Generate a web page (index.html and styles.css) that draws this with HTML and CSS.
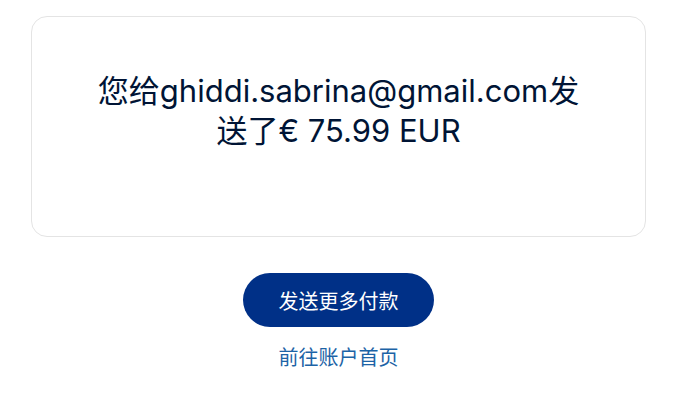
FILE: index.html
```html
<!DOCTYPE html>
<html lang="zh">
<head>
<meta charset="utf-8">
<link rel="stylesheet" href="styles.css">
</head>
<body>
<main class="page">
  <section class="card">
    <h1 class="message">您给ghiddi.sabrina@gmail.com发送了€ 75.99 EUR</h1>
  </section>
  <div class="actions">
    <button class="primary">发送更多付款</button>
    <a class="link" href="#">前往账户首页</a>
  </div>
</main>
</body>
</html>
```

FILE: styles.css
```css
html, body {
  margin: 0;
  padding: 0;
  background: #ffffff;
}
body {
  font-family: Inter, "Noto Sans CJK SC", sans-serif;
  color: #001435;
}
.page {
  display: flex;
  flex-direction: column;
  padding: 16px 40px 0 31px;
}
.card {
  box-sizing: border-box;
  width: 615px;
  height: 221px;
  border: 1px solid #e4e4e4;
  border-radius: 16px;
  padding: 54px 60px 0;
  display: flex;
  justify-content: center;
}
.message {
  margin: 0;
  font-size: 31px;
  font-weight: 400;
  line-height: 40px;
  text-align: center;
}
.actions {
  width: 615px;
  display: flex;
  flex-direction: column;
  align-items: center;
  margin-top: 36px;
}
.primary {
  width: 191px;
  height: 54px;
  border: none;
  border-radius: 27px;
  background: #003087;
  color: #ffffff;
  font-family: Inter, "Noto Sans CJK SC", sans-serif;
  font-size: 20px;
  padding: 0;
}
.link {
  margin-top: 16px;
  font-size: 20px;
  line-height: 30px;
  color: #1c63a6;
  text-decoration: none;
}
```
